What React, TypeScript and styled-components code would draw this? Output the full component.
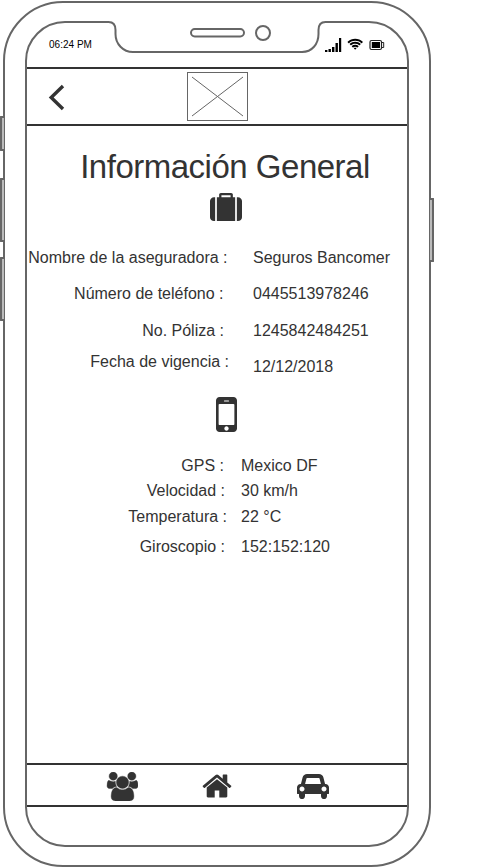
import React from "react";
import styled, { createGlobalStyle } from "styled-components";

const INK = "#333333";
const LINE = "#666666";

const GlobalStyle = createGlobalStyle`
  *, *::before, *::after { box-sizing: border-box; }
  body { margin: 0; background: #fff; overflow: hidden; }
`;

const Page = styled.div`
  position: relative;
  width: 488px;
  height: 867px;
  padding: 1px 0 0 3px;
  background: #fff;
  color: ${INK};
  font-family: "Liberation Sans", Arial, Helvetica, sans-serif;
`;

const Phone = styled.div`
  width: 428px;
  height: 866px;
  padding: 18px 20px;
  border: 2px solid ${LINE};
  border-radius: 60px;
`;

const Screen = styled.div`
  position: relative;
  display: flex;
  flex-direction: column;
  width: 384px;
  height: 826px;
  border: 2px solid ${LINE};
  border-radius: 40px;
`;

const SideButton = styled.div<{ $side: "left" | "right"; $top: number; $height: number }>`
  position: absolute;
  top: ${(p) => p.$top}px;
  ${(p) => (p.$side === "left" ? "left: 0;" : "left: 430px;")}
  width: 4px;
  height: ${(p) => p.$height}px;
  border: 2px solid ${LINE};
  ${(p) => (p.$side === "left" ? "border-right: 0;" : "border-left: 0;")}
  border-radius: ${(p) => (p.$side === "left" ? "1px 0 0 1px" : "0 1px 1px 0")};
  background: #bbb;
`;

const Notch = styled.svg`
  position: absolute;
  left: 79px;
  top: -2px;
`;

const StatusBar = styled.div`
  display: flex;
  flex: 0 0 44px;
  justify-content: space-between;
  padding: 14px 21px 0 22px;
`;

const Clock = styled.span`
  margin-top: 1px;
  font-size: 10px;
  line-height: 14px;
  color: #000;
  letter-spacing: 0.02px;
`;

const StatusIcons = styled.div`
  display: flex;
  height: 16px;
`;

const Header = styled.header`
  display: grid;
  grid-template-columns: 1fr 61px 1fr;
  flex: 0 0 59px;
  border-top: 2px solid ${INK};
  border-bottom: 2px solid ${INK};
`;

const BackButton = styled.button`
  align-self: start;
  display: block;
  padding: 14px 0 0 21px;
  border: 0;
  background: none;
  text-align: left;
  line-height: 0;
`;

const Logo = styled.svg`
  margin-top: 3px;
`;

const Content = styled.main`
  display: flex;
  flex: 0 0 637px;
  flex-direction: column;
  align-items: center;
`;

const Title = styled.h1`
  margin: 22px 0 0 16px;
  font-size: 33px;
  letter-spacing: -0.49px;
  font-weight: 400;
  line-height: 38px;
  white-space: nowrap;
`;

const Glyph = styled.svg<{ $top?: number; $left?: number }>`
  display: block;
  flex: none;
  fill: ${INK};
  margin-top: ${(p) => p.$top ?? 0}px;
  margin-left: ${(p) => p.$left ?? 0}px;
`;

const Details = styled.dl<{ $top: number; $split: number }>`
  display: grid;
  grid-template-columns: ${(p) => p.$split}px 1fr;
  width: 100%;
  margin: ${(p) => p.$top}px 0 0;
`;

const Column = styled.div<{ $end?: boolean }>`
  display: flex;
  flex-direction: column;
  align-items: ${(p) => (p.$end ? "flex-end" : "flex-start")};
`;

const Label = styled.dt<{ $gap?: number; $right: number }>`
  margin-top: ${(p) => p.$gap ?? 0}px;
  padding-right: ${(p) => p.$right}px;
  font-size: 16px;
  line-height: 18px;
  white-space: nowrap;
`;

const Value = styled.dd<{ $gap?: number }>`
  margin: ${(p) => p.$gap ?? 0}px 0 0;
  font-size: 16px;
  line-height: 18px;
  white-space: nowrap;
`;

const TabBar = styled.nav`
  display: flex;
  flex: 0 0 44px;
  border-top: 2px solid ${INK};
  border-bottom: 2px solid ${INK};
`;

const SUITCASE =
  "M640 256h512v-128h-512v128zm-352 0v1408h-64q-92 0-158-66t-66-158v-960q0-92 66-158t158-66h64zm1120 0v1408h-1024v-1408h128v-160q0-40 28-68t68-28h576q40 0 68 28t28 68v160h128zm384 224v960q0 92-66 158t-158 66h-64v-1408h64q92 0 158 66t66 158z";
const MOBILE =
  "M976 1408q0-33-23.500-56.500t-56.500-23.500-56.500 23.500-23.500 56.500 23.500 56.500 56.500 23.500 56.500-23.500 23.500-56.500zm208-160v-704q0-13-9.500-22.500t-22.500-9.500h-512q-13 0-22.500 9.500t-9.500 22.500v704q0 13 9.500 22.500t22.500 9.500h512q13 0 22.500-9.500t9.500-22.500zm-192-848q0-16-16-16h-160q-16 0-16 16t16 16h160q16 0 16-16zm288-16v1024q0 52-38 90t-90 38h-512q-52 0-90-38t-38-90v-1024q0-52 38-90t90-38h512q52 0 90 38t38 90z";
const USERS =
  "M657 896q-162 5-265 128h-134q-82 0-138-40.500t-56-118.500q0-353 124-353 6 0 43.500 21t97.500 42.500 119 21.500q67 0 133-23-5 37-5 66 0 139 81 256zm1071 637q0 120-73 189.500t-194 69.500h-874q-121 0-194-69.500t-73-189.500q0-53 3.500-103.500t14-109 26.500-108.500 43-97.500 62-81 85.500-53.500 111.500-20q10 0 43 21.500t73 48 107 48 135 21.500 135-21.500 107-48 73-48 43-21.500q61 0 111.500 20t85.500 53.500 62 81 43 97.500 26.500 108.500 14 109 3.500 103.500zm-1024-1277q0 106-75 181t-181 75-181-75-75-181 75-181 181-75 181 75 75 181zm704 384q0 159-112.500 271.500t-271.500 112.500-271.500-112.500-112.500-271.500 112.500-271.500 271.500-112.500 271.500 112.500 112.500 271.500zm576 225q0 78-56 118.500t-138 40.500h-134q-103-123-265-128 81-117 81-256 0-29-5-66 66 23 133 23 59 0 119-21.500t97.500-42.500 43.500-21q124 0 124 353zm-128-609q0 106-75 181t-181 75-181-75-75-181 75-181 181-75 181 75 75 181z";
const HOME =
  "M1472 992v480q0 26-19 45t-45 19h-384v-384h-256v384h-384q-26 0-45-19t-19-45v-480q0-1 .5-3t.5-3l575-474 575 474q1 2 1 6zm223-69l-62 74q-8 9-21 11h-3q-13 0-21-7l-692-577-692 577q-12 8-24 7-13-2-21-11l-62-74q-8-10-7-23.500t11-21.500l719-599q32-26 76-26t76 26l244 204v-195q0-14 9-23t23-9h192q14 0 23 9t9 23v408l219 182q10 8 11 21.500t-7 23.500z";
const CAR =
  "M480 1088q0-66-47-113t-113-47-113 47-47 113 47 113 113 47 113-47 47-113zm36-320h1016l-89-357q-2-8-14-17.500t-21-9.500h-768q-9 0-21 9.500t-14 17.500zm1372 320q0-66-47-113t-113-47-113 47-47 113 47 113 113 47 113-47 47-113zm160-96v384q0 14-9 23t-23 9h-96v128q0 80-56 136t-136 56-136-56-56-136v-128h-1024v128q0 80-56 136t-136 56-136-56-56-136v-128h-96q-14 0-23-9t-9-23v-384q0-93 65.500-158.500t158.500-65.500h28l105-419q23-94 104-157.500t179-63.500h768q98 0 179 63.500t104 157.500l105 419h28q93 0 158.500 65.500t65.500 158.500z";
const WIFI =
  "M1024 1523q-20 0-93-73.500t-73-93.500q0-32 62.500-54t103.500-22 103.500 22 62.500 54q0 20-73 93.500t-93 73.500zm270-271q-2 0-40-25t-101.500-50-128.500-25-128.500 25-101 50-40.500 25q-18 0-93.500-75t-75.500-93q0-13 10-23 78-77 196-121t233-44 233 44 196 121q10 10 10 23 0 18-75.500 93t-93.500 75zm273-272q-11 0-23-8-136-105-252-154.500t-268-49.500q-85 0-170.500 22t-149 53-113.500 62-79 53-31 22q-17 0-92-75t-75-93q0-12 10-22 132-132 320-205t380-73 380 73 320 205q10 10 10 22 0 18-75 93t-92 75zm271-271q-11 0-22-9-179-157-371.500-236.500t-420.500-79.500-420.500 79.500-371.500 236.500q-11 9-22 9-17 0-92.500-75t-75.500-93q0-13 10-23 187-186 445-288t527-102 527 102 445 288q10 10 10 23 0 18-75.500 93t-92.500 75z";

export default function App() {
  return (
    <Page>
      <GlobalStyle />
      <Phone>
        <Screen>
          <Notch width="222" height="33" viewBox="106 21 222 33" fill="none" stroke={LINE} strokeWidth="2">
            <path d="M106 20H328V22H325.500Q318.500 22 318.500 30V34Q318.500 52 302 52H133Q115.500 50 115.500 34V30Q115.500 22 108.500 22H106Z" fill="#fff" stroke="none" />
            <path d="M106 22H108.500Q115.500 22 115.500 30V34C115.500 44 123 52 133 52H302C312 52 318.500 44 318.500 34V30Q318.500 22 325.500 22H328" />
            <rect x="191" y="29" width="53" height="7.500" rx="3.750" />
            <circle cx="263" cy="33" r="7" />
          </Notch>
          <StatusBar>
            <Clock>06:24 PM</Clock>
            <StatusIcons>
              <svg width="62" height="16" viewBox="324 37 62 16">
                <path d="M325 50h2.400v2h-2.400zM328.500 49h2.400v3h-2.400zM332 47h2.400v5h-2.400zM335.500 43h2.400v9h-2.400zM339 38h2.200v14h-2.200z" />
                <path d={WIFI} transform="translate(347.200 37.700) scale(.0078)" />
                <rect x="370" y="40.500" width="11.500" height="9" rx="1.500" fill="none" stroke="#222" strokeWidth="1.200" />
                <path d="M382 42.500h1.700v5H382" fill="none" stroke="#222" />
                <rect x="371.800" y="42" width="8.200" height="6" />
              </svg>
            </StatusIcons>
          </StatusBar>
          <Header>
            <BackButton aria-label="Atrás">
              <svg width="18" height="28" viewBox="48 83 18 28" fill="none" stroke={INK} strokeWidth="3.400">
                <path d="M63 86L51.200 97.500L63 109" />
              </svg>
            </BackButton>
            <Logo width="61" height="49" viewBox="0 0 61 49" fill="none" stroke={LINE}>
              <rect x=".5" y=".5" width="60" height="48" />
              <path d="M5 5L56 44M56 5L5 44" />
            </Logo>
          </Header>
          <Content>
            <Title>Información General</Title>
            <Glyph width="32" height="28" viewBox="0 0 1792 1664" $top={7} $left={18} preserveAspectRatio="none">
              <path d={SUITCASE} />
            </Glyph>
            <Details $top={28} $split={226}>
              <Column $end>
                <Label $right={25.5}>Nombre de la aseguradora :</Label>
                <Label $right={29.5} $gap={18}>Número de teléfono :</Label>
                <Label $right={29} $gap={19}>No. Póliza :</Label>
                <Label $right={24} $gap={13}>Fecha de vigencia :</Label>
              </Column>
              <Column>
                <Value>Seguros Bancomer</Value>
                <Value $gap={18}>0445513978246</Value>
                <Value $gap={19}>1245842484251</Value>
                <Value $gap={18}>12/12/2018</Value>
              </Column>
            </Details>
            <Glyph width="21" height="35" viewBox="512 256 768 1280" $top={21} $left={18}>
              <path d={MOBILE} />
            </Glyph>
            <Details $top={25} $split={214}>
              <Column $end>
                <Label $right={17}>GPS :</Label>
                <Label $right={16} $gap={7}>Velocidad :</Label>
                <Label $right={14} $gap={8}>Temperatura :</Label>
                <Label $right={16} $gap={12}>Giroscopio :</Label>
              </Column>
              <Column>
                <Value>Mexico DF</Value>
                <Value $gap={7}>30 km/h</Value>
                <Value $gap={8}>22 °C</Value>
                <Value $gap={12}>152:152:120</Value>
              </Column>
            </Details>
          </Content>
          <TabBar>
            <Glyph width="32" height="29" viewBox="0 0 1984 1792" $top={7} $left={79}>
              <path d={USERS} stroke={INK} strokeWidth="24" />
            </Glyph>
            <Glyph width="32" height="32" viewBox="0 0 1792 1792" $top={5} $left={63}>
              <path d={HOME} />
            </Glyph>
            <Glyph width="32" height="28" viewBox="0 0 2048 1792" $top={7} $left={64}>
              <path d={CAR} />
            </Glyph>
          </TabBar>
        </Screen>
      </Phone>
      <SideButton $side="left" $top={116} $height={35} />
      <SideButton $side="left" $top={178} $height={64} />
      <SideButton $side="left" $top={257} $height={64} />
      <SideButton $side="right" $top={198} $height={64} />
    </Page>
  );
}
